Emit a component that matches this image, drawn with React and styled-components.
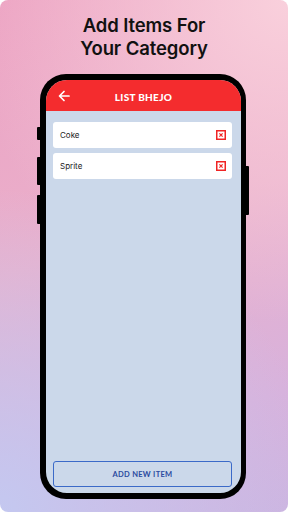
import React from "react";
import styled, { createGlobalStyle } from "styled-components";

const GlobalStyle = createGlobalStyle`
  html, body {
    margin: 0;
    padding: 0;
    background: #ffffff;
  }
  * {
    box-sizing: border-box;
  }
`;

const items = ["Coke", "Sprite"];

function DeleteIcon() {
  return (
    <svg width="10" height="10" viewBox="0 0 10 10">
      <rect x="0.75" y="0.75" width="8.5" height="8.5" fill="#fff" stroke="#f02424" strokeWidth="1.5" />
      <path d="M3.4 3.4 L6.6 6.6 M6.6 3.4 L3.4 6.6" stroke="#f02424" strokeWidth="1.2" />
    </svg>
  );
}

function BackArrow() {
  return (
    <svg width="12" height="12" viewBox="0 0 12 12">
      <path
        d="M11 6 H1.8 M6 1.5 L1.5 6 L6 10.5"
        stroke="#fff"
        strokeWidth="1.7"
        fill="none"
        strokeLinecap="round"
        strokeLinejoin="round"
      />
    </svg>
  );
}

function App() {
  return (
    <Page>
      <GlobalStyle />
      <Heading>
        Add Items For
        <br />
        Your Category
      </Heading>
      <Phone>
        <SideButton $side="left" $top={53} $height={13} />
        <SideButton $side="left" $top={83} $height={28} />
        <SideButton $side="left" $top={121} $height={29} />
        <SideButton $side="right" $top={92} $height={49} />
        <Screen>
          <Header>
            <BackBtn>
              <BackArrow />
            </BackBtn>
            <Title>LIST BHEJO</Title>
          </Header>
          <List>
            {items.map((name) => (
              <ItemCard key={name}>
                <ItemName>{name}</ItemName>
                <DeleteIcon />
              </ItemCard>
            ))}
          </List>
          <AddButton>ADD NEW ITEM</AddButton>
        </Screen>
      </Phone>
    </Page>
  );
}

const Page = styled.div`
  width: 288px;
  height: 512px;
  overflow: hidden;
  border-radius: 8px;
  display: flex;
  flex-direction: column;
  align-items: center;
  padding-top: 14px;
  background:
    radial-gradient(circle at 100% 0%, #f9d0dc 0%, rgba(249, 208, 220, 0) 55%),
    radial-gradient(circle at 0% 100%, #c4c8f0 0%, rgba(196, 200, 240, 0) 55%),
    linear-gradient(160deg, #eca2c2 0%, #eab0cc 45%, #d8b2dc 80%, #cdb4e0 100%);
`;

const Heading = styled.h1`
  margin: 0;
  font-family: Inter, "Noto Sans", sans-serif;
  font-weight: 600;
  font-size: 18.5px;
  line-height: 23px;
  letter-spacing: -0.1px;
  color: #111;
  text-align: center;
`;

const Phone = styled.div`
  position: relative;
  margin-top: 14px;
  margin-right: 2px;
  width: 206px;
  height: 425px;
  background: #000;
  border-radius: 26px;
  padding: 6px 5px 6px 6px;
`;

const SideButton = styled.div`
  position: absolute;
  top: ${(p) => p.$top}px;
  height: ${(p) => p.$height}px;
  width: 4px;
  background: #000;
  border-radius: 1px;
  ${(p) => (p.$side === "left" ? "left: -3px;" : "right: -3px;")}
`;

const Screen = styled.div`
  width: 100%;
  height: 100%;
  background: #cbd8ea;
  border-radius: 21px;
  overflow: hidden;
  display: flex;
  flex-direction: column;
`;

const Header = styled.div`
  position: relative;
  height: 31px;
  flex-shrink: 0;
  background: #f42c2e;
  display: flex;
  align-items: center;
  justify-content: center;
`;

const BackBtn = styled.div`
  position: absolute;
  left: 12px;
  top: 10px;
  display: flex;
`;

const Title = styled.div`
  font-family: Lato, Inter, sans-serif;
  font-weight: 900;
  font-size: 10px;
  letter-spacing: 0.3px;
  color: #fff;
  padding-top: 3px;
`;

const List = styled.div`
  flex: 1;
  display: flex;
  flex-direction: column;
  gap: 5px;
  padding: 11px 9px 0 7px;
`;

const ItemCard = styled.div`
  height: 26px;
  background: #fff;
  border-radius: 3px;
  display: flex;
  align-items: center;
  justify-content: space-between;
  padding: 0 6px 0 7px;
`;

const ItemName = styled.span`
  font-family: Inter, "Noto Sans", sans-serif;
  font-size: 8px;
  color: #222;
`;

const AddButton = styled.button`
  margin: 0 9px 6px 7px;
  height: 26px;
  border: 1px solid #3b6ac8;
  border-radius: 3px;
  background: transparent;
  font-family: Lato, Inter, sans-serif;
  font-weight: 700;
  font-size: 7.5px;
  letter-spacing: 0.3px;
  color: #2a4aa0;
  cursor: pointer;
`;

export default App;
